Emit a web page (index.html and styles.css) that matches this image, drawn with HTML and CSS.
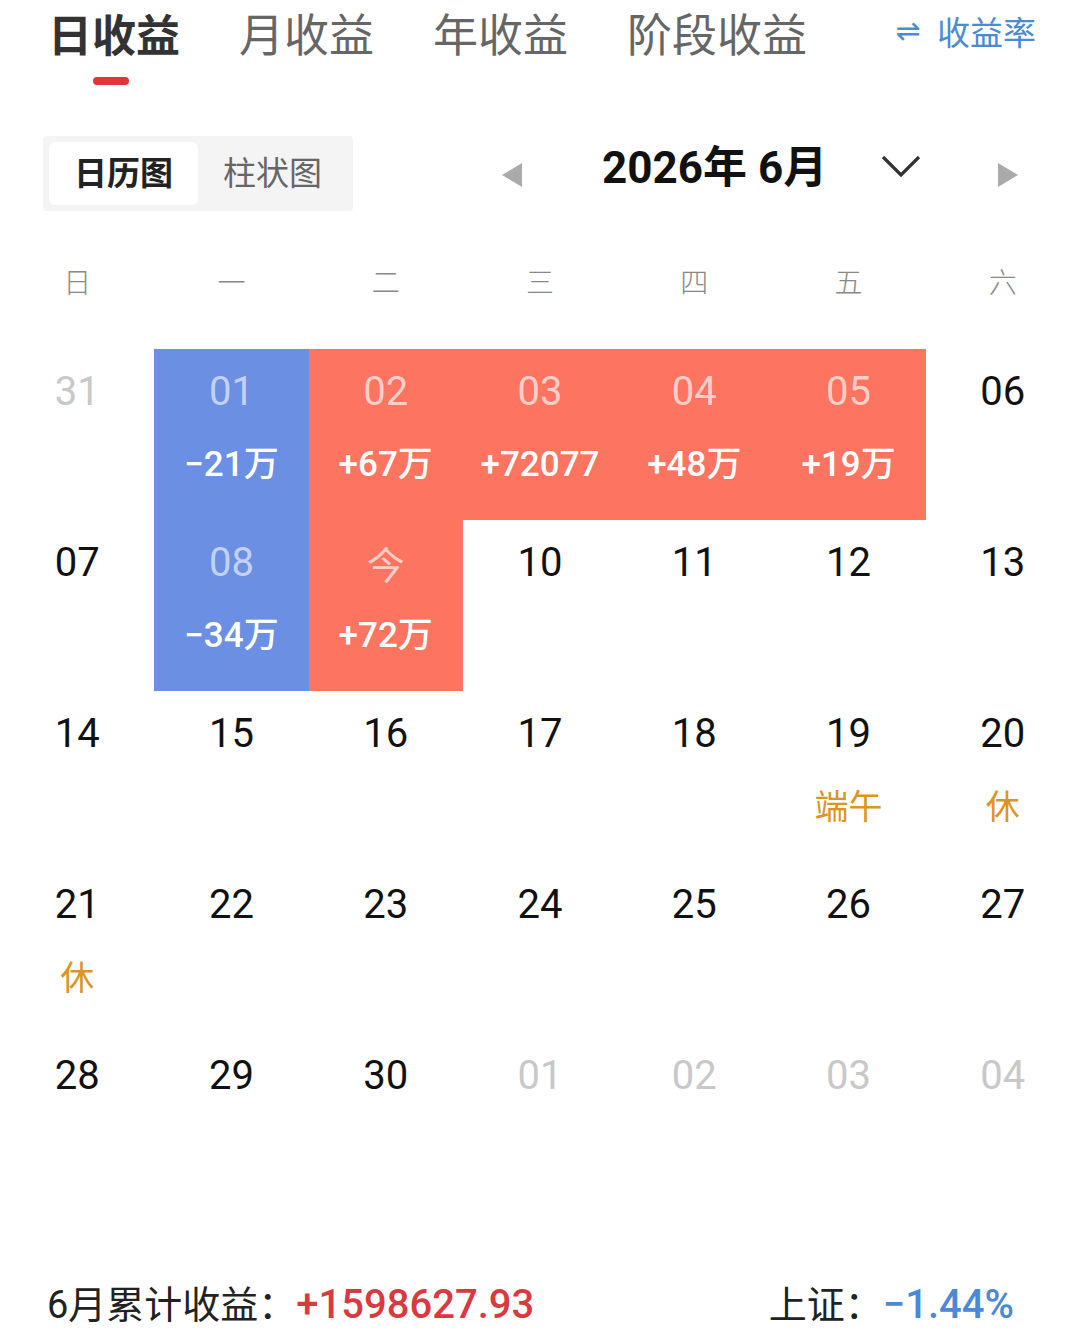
FILE: index.html
```html
<!DOCTYPE html>
<html lang="zh-CN">
<head>
<meta charset="utf-8">
<link rel="stylesheet" href="styles.css">
</head>
<body>
<div class="page">
  <div class="tabs">
    <div class="tab active">日收益<span class="indicator"></span></div>
    <div class="tab">月收益</div>
    <div class="tab">年收益</div>
    <div class="tab">阶段收益</div>
    <div class="rate"><span class="swap">⇌</span>收益率</div>
  </div>

  <div class="toolbar">
    <div class="toggle">
      <div class="opt on">日历图</div>
      <div class="opt">柱状图</div>
    </div>
    <div class="nav">
      <span class="tri left"></span>
      <span class="title">2026年 6月</span>
      <svg class="chev" width="40" height="24" viewBox="0 0 40 24"><path d="M2 3 L20 21 L38 3" fill="none" stroke="#333" stroke-width="3.2"/></svg>
      <span class="tri right"></span>
    </div>
  </div>

  <div class="week">
    <span>日</span><span>一</span><span>二</span><span>三</span><span>四</span><span>五</span><span>六</span>
  </div>

  <div class="cal">
    <div class="cell"><div class="d other">31</div></div>
    <div class="cell loss"><div class="d">01</div><div class="amt">−21万</div></div>
    <div class="cell gain"><div class="d">02</div><div class="amt">+67万</div></div>
    <div class="cell gain"><div class="d">03</div><div class="amt">+72077</div></div>
    <div class="cell gain"><div class="d">04</div><div class="amt">+48万</div></div>
    <div class="cell gain"><div class="d">05</div><div class="amt">+19万</div></div>
    <div class="cell"><div class="d">06</div></div>

    <div class="cell"><div class="d">07</div></div>
    <div class="cell loss"><div class="d">08</div><div class="amt">−34万</div></div>
    <div class="cell gain"><div class="d cjk">今</div><div class="amt">+72万</div></div>
    <div class="cell"><div class="d">10</div></div>
    <div class="cell"><div class="d">11</div></div>
    <div class="cell"><div class="d">12</div></div>
    <div class="cell"><div class="d">13</div></div>

    <div class="cell"><div class="d">14</div></div>
    <div class="cell"><div class="d">15</div></div>
    <div class="cell"><div class="d">16</div></div>
    <div class="cell"><div class="d">17</div></div>
    <div class="cell"><div class="d">18</div></div>
    <div class="cell"><div class="d">19</div><div class="hol">端午</div></div>
    <div class="cell"><div class="d">20</div><div class="hol">休</div></div>

    <div class="cell"><div class="d">21</div><div class="hol">休</div></div>
    <div class="cell"><div class="d">22</div></div>
    <div class="cell"><div class="d">23</div></div>
    <div class="cell"><div class="d">24</div></div>
    <div class="cell"><div class="d">25</div></div>
    <div class="cell"><div class="d">26</div></div>
    <div class="cell"><div class="d">27</div></div>

    <div class="cell"><div class="d">28</div></div>
    <div class="cell"><div class="d">29</div></div>
    <div class="cell"><div class="d">30</div></div>
    <div class="cell"><div class="d other">01</div></div>
    <div class="cell"><div class="d other">02</div></div>
    <div class="cell"><div class="d other">03</div></div>
    <div class="cell"><div class="d other">04</div></div>
  </div>

  <div class="footer">
    <div class="sum">6月累计收益：<span class="red">+1598627.93</span></div>
    <div class="idx">上证：<span class="blue">−1.44%</span></div>
  </div>
</div>
</body>
</html>
```

FILE: styles.css
```css
* { box-sizing: border-box; }
html, body { margin: 0; padding: 0; background: #fff; }
body {
  font-family: Roboto, "Noto Sans CJK SC", sans-serif;
  color: #000;
  width: 1080px;
  height: 1340px;
  overflow: hidden;
}
.page { width: 1080px; }

.tabs {
  display: flex;
  align-items: flex-start;
  padding-left: 48px;
  height: 136px;
}
.tab {
  position: relative;
  font-family: "Noto Sans CJK SC", sans-serif;
  font-size: 45px;
  line-height: 66px;
  color: #666;
  margin-right: 59px;
}
.tab.active { color: #333; font-weight: 700; font-size: 44px; }
.indicator {
  position: absolute;
  left: 45px;
  top: 77px;
  width: 36px;
  height: 8px;
  border-radius: 4px;
  background: #e0353b;
}
.rate {
  margin-left: auto;
  margin-right: 44px;
  display: flex;
  align-items: center;
  font-family: "Noto Sans CJK SC", sans-serif;
  font-size: 33px;
  line-height: 62px;
  color: #4a8bd2;
}
.swap { font-family: "DejaVu Sans", sans-serif; font-size: 30px; margin-right: 16px; }

.toolbar {
  display: flex;
  align-items: center;
  height: 75px;
  padding-left: 43px;
}
.toggle {
  display: flex;
  width: 310px;
  height: 75px;
  padding: 6px;
  background: #f4f4f4;
  border-radius: 4px;
}
.opt {
  width: 149px;
  display: flex;
  align-items: center;
  justify-content: center;
  font-family: "Noto Sans CJK SC", sans-serif;
  font-size: 33px;
  line-height: 1;
  padding-bottom: 4px;
  color: #666;
  border-radius: 6px;
}
.opt.on { background: #fff; color: #222; font-weight: 700; }
.nav {
  display: flex;
  align-items: center;
  margin-left: 149px;
  width: 516px;
  height: 75px;
}
.tri { width: 0; height: 0; border-top: 12px solid transparent; border-bottom: 12px solid transparent; margin-top: 2px; }
.tri.left { border-right: 20px solid #aaa; }
.tri.right { border-left: 20px solid #aaa; margin-left: auto; }
.title {
  margin-left: 80px;
  font-size: 44px;
  font-weight: 700;
  color: #111;
  line-height: 1;
  margin-top: -12px;
}
.chev { margin-left: 54px; margin-top: -16px; }

.week {
  display: grid;
  grid-template-columns: repeat(7, 1fr);
  height: 66px;
  margin-top: 39px;
  margin-bottom: 33px;
}
.week span {
  display: flex;
  align-items: center;
  justify-content: center;
  font-family: "Noto Sans CJK SC", sans-serif;
  font-size: 28px;
  font-weight: 300;
  line-height: 1;
  padding-bottom: 4px;
  color: #888;
}

.cal {
  display: grid;
  grid-template-columns: repeat(7, 1fr);
  grid-auto-rows: 171px;
}
.cell {
  display: flex;
  flex-direction: column;
  align-items: center;
  padding-top: 20px;
}
.cell.loss { background: #6b8fe2; }
.cell.gain { background: #fd7461; }
.d {
  font-size: 40px;
  line-height: 46px;
  color: #111;
}
.d.cjk { font-family: "Noto Sans CJK SC", sans-serif; font-size: 38px; }
.d.other { color: #c8c8c8; }
.loss .d { color: rgba(255,255,255,0.62); }
.gain .d { color: rgba(255,255,255,0.66); }
.amt {
  margin-top: 27px;
  font-size: 35px;
  line-height: 46px;
  font-weight: 500;
  color: #fff;
}
.hol {
  margin-top: 25px;
  font-family: "Noto Sans CJK SC", sans-serif;
  font-size: 34px;
  line-height: 46px;
  color: #dc9424;
}

.footer {
  display: flex;
  justify-content: space-between;
  align-items: center;
  margin-top: 72px;
  padding: 0 66px 0 47px;
  height: 50px;
}
.sum, .idx {
  font-family: Roboto, "Noto Sans CJK SC", sans-serif;
  font-size: 38px;
  color: #222;
}
.red { color: #d93a40; font-weight: 500; font-size: 40px; }
.blue { color: #4c88d8; font-weight: 500; font-size: 40px; }
```
